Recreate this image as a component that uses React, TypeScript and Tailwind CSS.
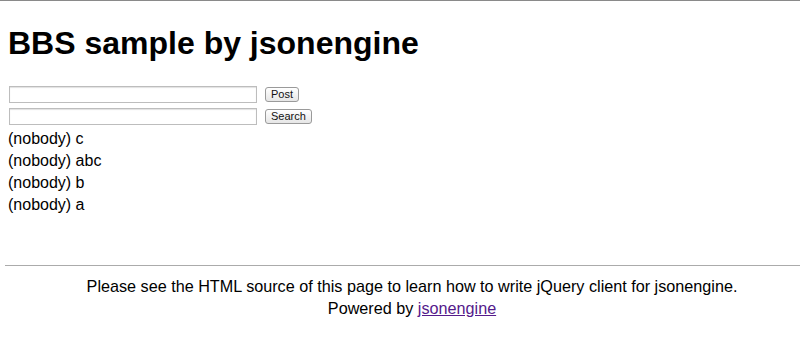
const posts = ["c", "abc", "b", "a"];

export default function App() {
  return (
    <div className="min-h-[344px] border-t border-[#8a8a8a] bg-white text-black [font-family:'Liberation_Sans',Arial,sans-serif]">
      <div className="px-2">
        <h1 className="mt-[22px] text-[32px] font-bold leading-[40px]">BBS sample by jsonengine</h1>
        <div className="mt-[23px] flex flex-col gap-[5px]">
          <Row label="Post" />
          <Row label="Search" />
        </div>
        <ul className="mt-[3px] text-[16px] leading-[22px]">
          {posts.map(p => (
            <li key={p}>(nobody) {p}</li>
          ))}
        </ul>
      </div>
      <hr className="ml-[5px] mt-[49px] border-t border-[#ababab]" />
      <div className="mt-[9px] pl-[24px] text-center text-[16.2px] leading-[22px]">
        <p>Please see the HTML source of this page to learn how to write jQuery client for jsonengine.</p>
        <p>
          Powered by <a href="#" className="text-[#551a8b] underline">jsonengine</a>
        </p>
      </div>
    </div>
  );
}

function Row({ label }: { label: string }) {
  return (
    <div className="flex items-center">
      <input
        type="text"
        className="ml-px h-[17px] w-[248px] border border-[#bdbdbd] bg-white shadow-[inset_0_1px_1px_rgba(0,0,0,0.12)]"
      />
      <button className="ml-[8px] h-[15px] rounded-[3px] border border-[#9a9a9a] bg-gradient-to-b from-white to-[#e6e6e6] px-[5px] text-[11px] font-medium leading-[13px] text-[#111]">
        {label}
      </button>
    </div>
  );
}
